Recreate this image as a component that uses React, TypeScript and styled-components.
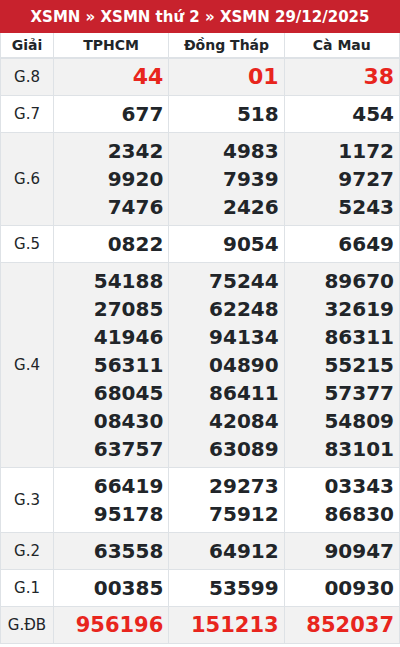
import styled, { createGlobalStyle } from "styled-components"

const GlobalStyle = createGlobalStyle`
  body {
    margin: 0;
    background: #ffffff;
    font-family: "DejaVu Sans", "Liberation Sans", sans-serif;
    color: #212529;
  }
`

const Wrapper = styled.div`
  width: 400px;
`

const TitleBar = styled.div`
  height: 33px;
  display: flex;
  align-items: center;
  justify-content: center;
  background-color: #c8222d;
  color: #ffffff;
  font-size: 15px;
  font-weight: 700;
`

const ResultTable = styled.table`
  width: 100%;
  border-collapse: collapse;
  table-layout: fixed;
`

const HeadCell = styled.th<{ $w?: number }>`
  width: ${p => (p.$w ? `${p.$w}px` : "auto")};
  height: 24px;
  padding: 0;
  border: 1px solid #dee2e6;
  border-top: none;
  border-bottom: 2px solid #dee2e6;
  font-size: 14px;
  font-weight: 700;
  text-align: center;
  color: #212529;
`

const Row = styled.tr<{ $gray: boolean }>`
  background-color: ${p => (p.$gray ? "#f2f2f2" : "#ffffff")};
`

const PrizeCell = styled.td`
  padding: 0;
  border: 1px solid #dee2e6;
  font-size: 15px;
  text-align: center;
  vertical-align: middle;
  color: #212529;
`

const NumberCell = styled.td`
  padding: 4px 5px 4px 0;
  border: 1px solid #dee2e6;
  text-align: right;
  vertical-align: middle;
`

const Num = styled.div<{ $size: number; $red: boolean }>`
  line-height: 28px;
  font-size: ${p => p.$size}px;
  font-weight: 700;
  color: ${p => (p.$red ? "#e8251d" : "#212529")};
`

type Prize = {
  name: string
  red?: boolean
  size?: number
  cols: string[][]
}

const prizes: Prize[] = [
  { name: "G.8", red: true, size: 22, cols: [["44"], ["01"], ["38"]] },
  { name: "G.7", cols: [["677"], ["518"], ["454"]] },
  {
    name: "G.6",
    cols: [
      ["2342", "9920", "7476"],
      ["4983", "7939", "2426"],
      ["1172", "9727", "5243"],
    ],
  },
  { name: "G.5", cols: [["0822"], ["9054"], ["6649"]] },
  {
    name: "G.4",
    cols: [
      ["54188", "27085", "41946", "56311", "68045", "08430", "63757"],
      ["75244", "62248", "94134", "04890", "86411", "42084", "63089"],
      ["89670", "32619", "86311", "55215", "57377", "54809", "83101"],
    ],
  },
  {
    name: "G.3",
    cols: [
      ["66419", "95178"],
      ["29273", "75912"],
      ["03343", "86830"],
    ],
  },
  { name: "G.2", cols: [["63558"], ["64912"], ["90947"]] },
  { name: "G.1", cols: [["00385"], ["53599"], ["00930"]] },
  { name: "G.ĐB", red: true, size: 21, cols: [["956196"], ["151213"], ["852037"]] },
]

const App = () => {
  return (
    <Wrapper>
      <GlobalStyle />
      <TitleBar>XSMN » XSMN thứ 2 » XSMN 29/12/2025</TitleBar>
      <ResultTable>
        <thead>
          <tr>
            <HeadCell $w={52}>Giải</HeadCell>
            <HeadCell>TPHCM</HeadCell>
            <HeadCell>Đồng Tháp</HeadCell>
            <HeadCell>Cà Mau</HeadCell>
          </tr>
        </thead>
        <tbody>
          {prizes.map((p, i) => (
            <Row key={p.name} $gray={i % 2 === 0}>
              <PrizeCell>{p.name}</PrizeCell>
              {p.cols.map((nums, j) => (
                <NumberCell key={j}>
                  {nums.map(n => (
                    <Num key={n} $size={p.size ?? 20} $red={!!p.red}>{n}</Num>
                  ))}
                </NumberCell>
              ))}
            </Row>
          ))}
        </tbody>
      </ResultTable>
    </Wrapper>
  )
}

export default App
